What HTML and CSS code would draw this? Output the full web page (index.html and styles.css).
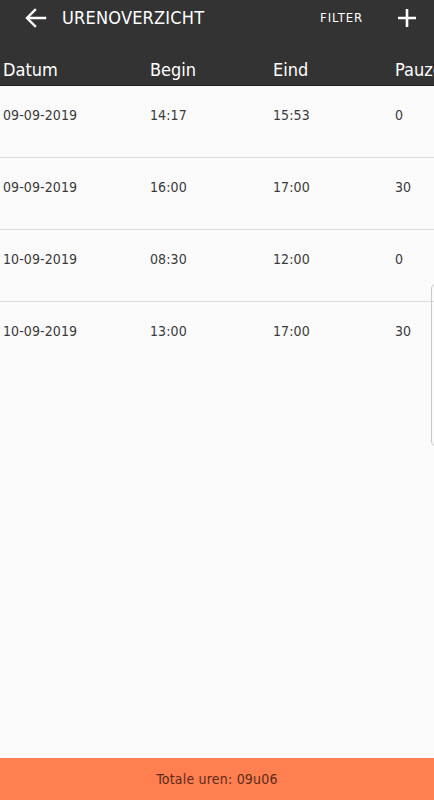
FILE: index.html
```html
<!DOCTYPE html>
<html>
<head>
<meta charset="utf-8">
<link rel="stylesheet" href="styles.css">
</head>
<body>
<div class="app">
  <header class="appbar">
    <div class="toolbar">
      <svg class="back" width="22" height="20" viewBox="0 0 22 20"><path d="M20 10H3M10 2L2 10l8 8" fill="none" stroke="#fff" stroke-width="2.4" stroke-linecap="square"/></svg>
      <span class="title">URENOVERZICHT</span>
      <span class="filter">FILTER</span>
      <svg class="plus" width="18" height="18" viewBox="0 0 18 18"><path d="M9 0v18M0 9h18" stroke="#fff" stroke-width="2.6"/></svg>
    </div>
    <div class="cols">
      <span>Datum</span><span>Begin</span><span>Eind</span><span>Pauze</span>
    </div>
  </header>
  <main class="list">
    <div class="row"><span>09-09-2019</span><span>14:17</span><span>15:53</span><span>0</span></div>
    <div class="row"><span>09-09-2019</span><span>16:00</span><span>17:00</span><span>30</span></div>
    <div class="row"><span>10-09-2019</span><span>08:30</span><span>12:00</span><span>0</span></div>
    <div class="row last"><span>10-09-2019</span><span>13:00</span><span>17:00</span><span>30</span></div>
  </main>
  <footer class="total">Totale uren: 09u06</footer>
  <div class="handle"></div>
</div>
</body>
</html>
```
FILE: styles.css
```css
html, body {
  margin: 0;
  padding: 0;
}
body {
  font-family: "DejaVu Sans Condensed", "DejaVu Sans", sans-serif;
  background: #fafafa;
  overflow: hidden;
}
.app {
  position: relative;
  width: 434px;
  height: 800px;
  display: flex;
  flex-direction: column;
  overflow: hidden;
}
.appbar {
  background: #333333;
  height: 86px;
  flex: none;
  border-bottom: 1px solid #222;
  box-sizing: border-box;
}
.toolbar {
  height: 35px;
  display: flex;
  align-items: center;
  color: #fff;
}
.back {
  margin-left: 25px;
  margin-top: 1px;
}
.title {
  margin-left: 15px;
  font-size: 18px;
  letter-spacing: 0.2px;
  flex: 1;
}
.filter {
  font-size: 13px;
  margin-right: 35px;
  letter-spacing: 0.9px;
}
.plus {
  margin-right: 18px;
}
.cols {
  display: grid;
  grid-template-columns: 147px 123px 122px 120px;
  padding-left: 3px;
  margin-top: 24px;
  color: #fff;
  font-size: 18px;
  white-space: nowrap;
}
.list {
  flex: 1;
}
.row {
  display: grid;
  grid-template-columns: 147px 123px 122px 120px;
  padding-left: 3px;
  height: 72px;
  padding-top: 21px;
  box-sizing: border-box;
  border-bottom: 1px solid #dcdcdc;
  font-size: 14px;
  color: #3a3a3a;
  letter-spacing: 0.1px;
}
.row.last {
  border-bottom: none;
}
.total {
  flex: none;
  height: 42px;
  background: #ff7f50;
  color: #5a2b1a;
  font-size: 14px;
  display: flex;
  align-items: center;
  justify-content: center;
  letter-spacing: 0.2px;
}
.handle {
  position: absolute;
  left: 431px;
  top: 283px;
  width: 12px;
  height: 164px;
  border: 1px solid #c8c8c8;
  border-radius: 6px;
  box-sizing: border-box;
}
```
